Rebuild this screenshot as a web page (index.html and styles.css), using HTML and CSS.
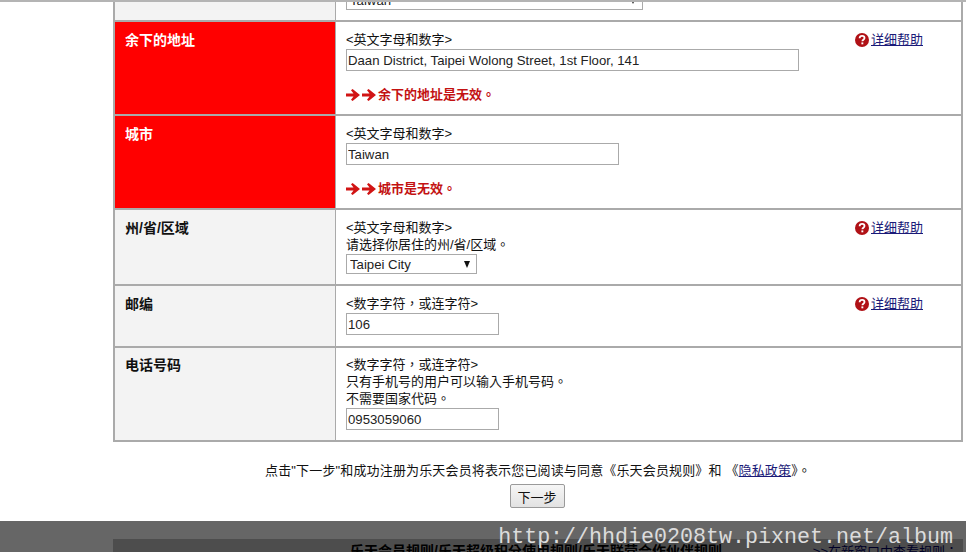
FILE: index.html
```html
<!DOCTYPE html>
<html lang="zh-TW">
<head>
<meta charset="utf-8">
<title>注册</title>
<link rel="stylesheet" href="styles.css">
</head>
<body>
<div class="top-rule"></div>
<main class="page">
  <div class="form">
    <div class="row row-clipped">
      <div class="label"><div class="shift">国家:</div></div>
      <div class="field"><div class="shift-field"><div class="sel-wrap sel-country"><select class="ctl"><option>Taiwan</option></select></div></div></div>
    </div>
    <div class="row row-address error">
      <div class="label">余下的地址</div>
      <div class="field">
        <div class="hint-line"><span>&lt;英文字母和数字&gt;</span><a class="help" href="#"><svg class="help-icon" viewBox="0 0 14 14"><circle cx="7" cy="7" r="7" fill="#b01116"/><path d="M4.6 5.2c.1-1.5 1.1-2.3 2.5-2.3s2.4.8 2.4 2c0 1.8-2.1 1.7-2.1 3.3" fill="none" stroke="#fff" stroke-width="1.8"/><rect x="6.4" y="9.4" width="1.9" height="1.9" fill="#fff"/></svg>详细帮助</a></div>
        <input class="ctl w453" value="Daan District, Taipei Wolong Street, 1st Floor, 141">
        <div class="err"><svg class="arrows" viewBox="0 0 31 12"><path d="M0 4.6h7.5L5 1.3 6.6 0 14 6l-7.4 6L5 10.7l2.5-3.3H0z" fill="#d11414"/><path d="M16 4.6h7.5L21 1.3 22.6 0 30 6l-7.4 6L21 10.7l2.5-3.3H16z" fill="#d11414"/></svg>余下的地址是无效。</div>
      </div>
    </div>
    <div class="row row-city error">
      <div class="label">城市</div>
      <div class="field">
        <div class="hint-line"><span>&lt;英文字母和数字&gt;</span></div>
        <input class="ctl w273" value="Taiwan">
        <div class="err"><svg class="arrows" viewBox="0 0 31 12"><path d="M0 4.6h7.5L5 1.3 6.6 0 14 6l-7.4 6L5 10.7l2.5-3.3H0z" fill="#d11414"/><path d="M16 4.6h7.5L21 1.3 22.6 0 30 6l-7.4 6L21 10.7l2.5-3.3H16z" fill="#d11414"/></svg>城市是无效。</div>
      </div>
    </div>
    <div class="row row-state">
      <div class="label">州/省/区域</div>
      <div class="field">
        <div class="hint-line"><span>&lt;英文字母和数字&gt;</span><a class="help" href="#"><svg class="help-icon" viewBox="0 0 14 14"><circle cx="7" cy="7" r="7" fill="#b01116"/><path d="M4.6 5.2c.1-1.5 1.1-2.3 2.5-2.3s2.4.8 2.4 2c0 1.8-2.1 1.7-2.1 3.3" fill="none" stroke="#fff" stroke-width="1.8"/><rect x="6.4" y="9.4" width="1.9" height="1.9" fill="#fff"/></svg>详细帮助</a></div>
        <div class="hint-line">请选择你居住的州/省/区域。</div>
        <div class="sel-wrap sel-state"><select class="ctl"><option>Taipei City</option></select></div>
      </div>
    </div>
    <div class="row row-zip">
      <div class="label">邮编</div>
      <div class="field">
        <div class="hint-line"><span>&lt;数字字符，或连字符&gt;</span><a class="help" href="#"><svg class="help-icon" viewBox="0 0 14 14"><circle cx="7" cy="7" r="7" fill="#b01116"/><path d="M4.6 5.2c.1-1.5 1.1-2.3 2.5-2.3s2.4.8 2.4 2c0 1.8-2.1 1.7-2.1 3.3" fill="none" stroke="#fff" stroke-width="1.8"/><rect x="6.4" y="9.4" width="1.9" height="1.9" fill="#fff"/></svg>详细帮助</a></div>
        <input class="ctl w153" value="106">
      </div>
    </div>
    <div class="row row-phone">
      <div class="label">电话号码</div>
      <div class="field">
        <div class="hint-line">&lt;数字字符，或连字符&gt;</div>
        <div class="hint-line">只有手机号的用户可以输入手机号码。</div>
        <div class="hint-line">不需要国家代码。</div>
        <input class="ctl w153" value="0953059060">
      </div>
    </div>
  </div>
  <div class="agree">
    <p class="agree-text">点击"下一步"和成功注册为乐天会员将表示您已阅读与同意《乐天会员规则》和 《<a href="#">隐私政策</a>》。</p>
    <button class="next" type="button">下一步</button>
  </div>
  <div class="rules">
    <span class="rules-title">乐天会员规则/乐天超级积分使用规则/乐天联营合作伙伴规则</span>
    <a class="rules-link" href="#">&gt;&gt;在新窗口中查看规则：</a>
  </div>
</main>
<div class="watermark">http://hhdie0208tw.pixnet.net/album</div>
</body>
</html>
```
FILE: styles.css
```css
* { box-sizing: border-box; }
html, body { margin: 0; padding: 0; height: 552px; overflow: hidden; background: #fff; }
body {
  position: relative;
  font-family: "Liberation Sans", "Noto Sans CJK TC", sans-serif;
  font-size: 13px;
  line-height: 17px;
  color: #111;
}
a { color: #1a1a78; }
.top-rule { height: 2px; background: #b4b4b4; }
.page { width: 850px; margin-left: 113px; }
.form { border: 2px solid #aaa; border-top: 0; }
.row { display: grid; grid-template-columns: 221px 1fr; border-top: 2px solid #aaa; }
.row-clipped { border-top: 0; height: 18px; overflow: hidden; }
.row-address, .row-city { height: 94px; }
.row-state { height: 76px; }
.row-zip { height: 62px; }
.row-phone { height: 94px; }
.label {
  background: #f3f3f3;
  font-size: 14px;
  font-weight: 700;
  padding: 10px 10px;
  border-right: 1px solid #aaa;
}
.error .label { background: #f00; color: #fff; }
.field { padding: 9px 0 0 10px; min-width: 0; }
.row-phone .field { padding-top: 8px; }
.row-phone .label { padding-top: 9px; }
.hint-line { display: flex; justify-content: space-between; padding-right: 38px; height: 17px; }
.ctl {
  display: block;
  font-family: "Liberation Sans", sans-serif;
  font-size: 13.2px;
  color: #222;
  background: #fff;
  border: 1px solid #aaa;
  border-radius: 0;
  padding: 0 1px;
  height: 22px;
  margin-top: 1px;
}
.w453 { width: 453px; }
.w273 { width: 273px; }
.w153 { width: 153px; }
.sel-wrap { position: relative; height: 20px; }
.sel-wrap::after {
  content: "";
  position: absolute;
  right: 7px;
  top: 7px;
  border-top: 7px solid #111;
  border-left: 3.5px solid transparent;
  border-right: 3.5px solid transparent;
}
.sel-wrap select {
  appearance: none;
  width: 100%;
  height: 20px;
  margin: 0;
  padding-left: 3px;
}
.sel-country { width: 297px; }
.sel-state { width: 131px; margin-top: 1px; }
.shift { margin-top: -23px; }
.shift-field { margin-top: -20px; }
.row-clipped .label, .row-clipped .field { padding-top: 8px; }
.err {
  display: flex;
  align-items: center;
  margin-top: 15px;
  font-weight: 700;
  color: #c31212;
}
.arrows { width: 31px; height: 12px; margin-right: 1px; flex: none; }
.help { display: flex; align-items: center; gap: 2px; font-size: 13px; }
.help-icon { width: 14px; height: 14px; flex: none; }
.agree { height: 79px; padding-top: 20px; text-align: center; }
.agree-text { margin: 0 0 5px; height: 17px; line-height: 17px; font-size: 13px; letter-spacing: .15px; white-space: nowrap; }
.next {
  display: block;
  margin: 0 auto;
  position: relative;
  left: -1px;
  width: 55px;
  height: 24px;
  padding: 0;
  font-family: "Liberation Sans", "Noto Sans CJK TC", sans-serif;
  font-size: 13px;
  color: #111;
  background: linear-gradient(#f6f6f6, #e2e2e2);
  border: 1px solid #9a9a9a;
  border-radius: 2px;
}
.rules {
  position: relative;
  margin-top: 18px;
  height: 30px;
  padding: 4px 4px 0 0;
  background: #c0c0c0;
  text-align: center;
  color: #000;
}
.rules-title { font-size: 14px; font-weight: 700; }
.rules-link { position: absolute; right: 5px; top: 4px; color: #000060; }
.watermark {
  position: absolute;
  left: 0;
  right: 0;
  bottom: 0;
  height: 31px;
  padding: 4px 13px 0 0;
  background: rgba(0, 0, 0, .6);
  color: #dcdcdc;
  font-family: "Liberation Mono", monospace;
  font-size: 21.67px;
  line-height: 26px;
  text-align: right;
}
```
